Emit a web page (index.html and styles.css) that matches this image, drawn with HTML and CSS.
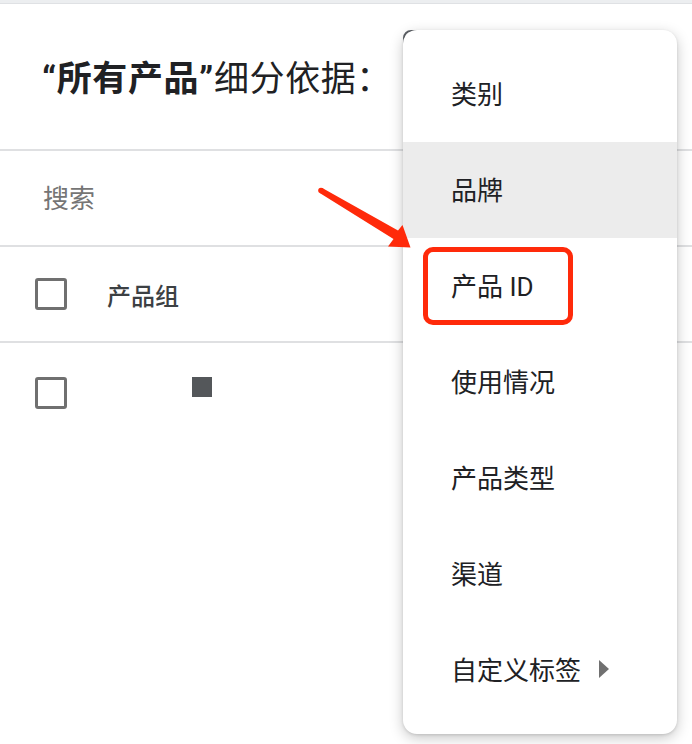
FILE: index.html
```html
<!DOCTYPE html>
<html lang="zh-CN">
<head>
    <meta charset="UTF-8">
    <meta name="viewport" content="width=device-width, initial-scale=1.0">
    <title>细分依据</title>
    <link rel="stylesheet" href="styles.css">
</head>
<body>
    <div class="panel">
        <div class="topbar"></div>
        <header class="head">
            <h1><b>“所有产品”</b>细分依据：</h1>
            <span class="picker"></span>
        </header>
        <div class="search">搜索</div>
        <div class="row">
            <span class="check"></span>
            <span class="label">产品组</span>
        </div>
        <div class="row">
            <span class="check"></span>
            <span class="swatch"></span>
        </div>
    </div>

    <ul class="menu">
        <li>类别</li>
        <li class="hover">品牌</li>
        <li>产品 ID</li>
        <li>使用情况</li>
        <li>产品类型</li>
        <li>渠道</li>
        <li>自定义标签 <span class="caret"></span></li>
        <span class="mark"></span>
    </ul>

    <!-- pointer to the highlighted option -->
    <svg class="arrow" width="692" height="744" viewBox="0 0 692 744">
        <circle cx="321" cy="190.5" r="2.8" fill="#ff2a0a"/>
        <polygon fill="#ff2a0a" points="322.3,188 398,230.5 402.5,225 410.5,247.5 388,246.5 393.5,239 319.7,193"/>
    </svg>
</body>
</html>
```

FILE: styles.css
```css
* {
    margin: 0;
    padding: 0;
    box-sizing: border-box;
}

body {
    font-family: Roboto, "Noto Sans CJK SC", sans-serif;
    background: #ffffff;
    color: #202124;
    width: 692px;
    height: 744px;
    overflow: hidden;
    position: relative;
}

.topbar {
    height: 4px;
    background: #eceef0;
    border-bottom: 1px solid #dfe1e4;
}

.head {
    height: 147px;
    display: flex;
    align-items: center;
    padding-left: 42px;
    padding-bottom: 2px;
    border-bottom: 2px solid #dfe0e2;
}

.head h1 {
    font-size: 35px;
    font-weight: 400;
    letter-spacing: 0.6px;
}

.head h1 b {
    font-weight: 700;
}

/* dropdown button sitting under the open menu */
.picker {
    position: absolute;
    left: 403px;
    top: 30px;
    width: 60px;
    height: 44px;
    border: 2px solid #5f6368;
    border-radius: 8px;
}

.search {
    height: 96px;
    display: flex;
    align-items: center;
    padding-left: 43px;
    padding-bottom: 4px;
    font-size: 26px;
    color: #757575;
    border-bottom: 2px solid #dfe0e2;
}

.row {
    height: 96px;
    display: flex;
    align-items: center;
    padding-left: 35px;
    border-bottom: 2px solid #dfe0e2;
}

.row:last-child {
    border-bottom: none;
    align-items: flex-start;
    padding-top: 34px;
}

.check {
    width: 32px;
    height: 32px;
    border: 3px solid #707070;
    border-radius: 3px;
}

.label {
    margin-left: 40px;
    font-size: 24px;
    font-weight: 500;
    color: #3c4043;
}

.swatch {
    width: 20px;
    height: 20px;
    background: #54575a;
    margin-left: 125px;
}

.menu {
    position: absolute;
    left: 403px;
    top: 30px;
    width: 274px;
    padding: 16px 0;
    list-style: none;
    background: #ffffff;
    border-radius: 14px;
    box-shadow: 0 4px 14px rgba(0, 0, 0, 0.22), 0 1px 3px rgba(0, 0, 0, 0.12);
}

.menu li {
    height: 96px;
    display: flex;
    align-items: center;
    padding-left: 48px;
    padding-bottom: 3px;
    font-size: 26px;
    color: #202124;
}

.menu li.hover {
    background: #ececec;
}

.caret {
    width: 0;
    height: 0;
    margin-left: 18px;
    border-top: 9px solid transparent;
    border-bottom: 9px solid transparent;
    border-left: 10px solid #707070;
}

.mark {
    position: absolute;
    left: 20px;
    top: 217px;
    width: 150px;
    height: 78px;
    border: 5px solid #ff2a0a;
    border-radius: 10px;
}

.arrow {
    position: absolute;
    left: 0;
    top: 0;
    pointer-events: none;
}
```
